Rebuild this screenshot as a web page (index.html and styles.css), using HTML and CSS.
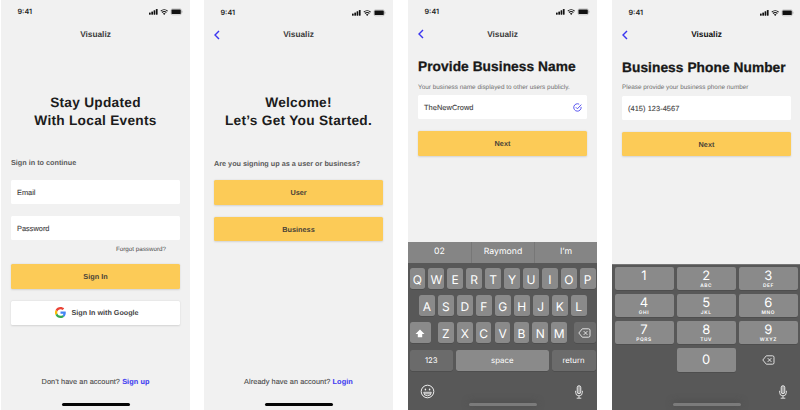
FILE: index.html
```html
<!DOCTYPE html>
<html lang="en">
<head>
<meta charset="utf-8">
<title>Visualiz</title>
<link rel="stylesheet" href="styles.css">
</head>
<body>
<svg class="defs" width="0" height="0">
  <symbol id="status" viewBox="0 0 34 8">
    <g fill="#111"><rect x="0" y="4.5" width="1.7" height="2.200" rx=".4"/><rect x="2.3" y="3.500" width="1.7" height="3.200" rx=".4"/><rect x="4.6" y="2.200" width="1.7" height="4.500" rx=".4"/><rect x="6.9" y="1" width="1.7" height="5.700" rx=".4"/>
    <path d="M15.2 6.9l-1.300-1.300a1.8 1.8 0 0 1 2.600 0z"/><rect x="22.500" y="1.5" width="9.300" height="4.600" rx=".9"/></g>
    <path d="M11.800 3.100a4.900 4.900 0 0 1 6.800 0M13 4.500a3.200 3.200 0 0 1 4.400 0" fill="none" stroke="#111" stroke-width="1.100"/>
    <rect x="22" y=".8" width="10.4" height="6" rx="1.5" fill="none" stroke="#111" stroke-opacity=".35" stroke-width=".5"/><path d="M33 2.8v1.9" stroke="#111" stroke-opacity=".4" stroke-width=".6"/>
  </symbol>
  <symbol id="back" viewBox="0 0 6 10"><path d="M5 .9L1 5l4 4.1" fill="none" stroke="#3a35f0" stroke-width="1.4"/></symbol>
  <symbol id="delete" viewBox="0 0 13 10"><path d="M4.3.8h6.2a1.5 1.5 0 0 1 1.5 1.5v5.4a1.5 1.5 0 0 1-1.500 1.500H4.3L.8 5zM5.7 3.1l3.7 3.8M9.4 3.1L5.7 6.9" fill="none" stroke="#fff" stroke-width=".8" stroke-linejoin="round"/></symbol>
  <symbol id="mic" viewBox="0 0 10 14"><g fill="none" stroke="#eee" stroke-width=".9"><rect x="3.2" y=".7" width="3.6" height="8" rx="1.8" fill="#999"/><path d="M1.6 5.800v1.400a3.400 3.700 0 0 0 6.800 0V5.800M5 11v2M2.700 13.200h4.600"/></g></symbol>
</svg>
<main class="board">
  <section class="screen">
    <div class="status"><span>9:41</span><svg><use href="#status"/></svg></div>
    <div class="nav"><span>Visualiz</span></div>
    <h1 class="hero">Stay Updated<br>With Local Events</h1>
    <p class="label">Sign in to continue</p>
    <div class="field">Email</div>
    <div class="field spaced">Password</div>
    <p class="forgot">Forgot password?</p>
    <div class="button">Sign In</div>
    <div class="button google spaced"><svg viewBox="0 0 48 48"><path fill="#ea4335" d="M24 9.500c3.500 0 6.700 1.200 9.200 3.600l6.900-6.900C35.900 2.400 30.500 0 24 0 14.600 0 6.500 5.400 2.600 13.200l8 6.200C12.400 13.700 17.700 9.500 24 9.500z"/><path fill="#4285f4" d="M47 24.600c0-1.600-.2-3.100-.4-4.600H24v9h12.900c-.6 3-2.200 5.500-4.700 7.200l7.700 6C44.400 38 47 32 47 24.600z"/><path fill="#fbbc05" d="M10.500 28.600a14.500 14.500 0 0 1 0-9.200l-8-6.200a24 24 0 0 0 0 21.600z"/><path fill="#34a853" d="M24 48c6.500 0 11.900-2.100 15.900-5.800l-7.700-6c-2.200 1.500-4.900 2.300-8.200 2.300-6.300 0-11.600-4.200-13.500-9.900l-8 6.200C6.500 42.600 14.600 48 24 48z"/></svg><span>Sign In with Google</span></div>
    <p class="foot">Don’t have an account? <b>Sign up</b></p>
    <div class="home"></div>
  </section>

  <section class="screen second">
    <div class="status"><span>9:41</span><svg><use href="#status"/></svg></div>
    <div class="nav"><svg><use href="#back"/></svg><span>Visualiz</span></div>
    <h1 class="hero">Welcome!<br>Let’s Get You Started.</h1>
    <p class="label">Are you signing up as a user or business?</p>
    <div class="button">User</div>
    <div class="button spaced">Business</div>
    <p class="foot">Already have an account? <b>Login</b></p>
    <div class="home"></div>
  </section>

  <section class="screen third">
    <div class="status"><span>9:41</span><svg><use href="#status"/></svg></div>
    <div class="nav"><svg><use href="#back"/></svg><span>Visualiz</span></div>
    <h1 class="title">Provide Business Name</h1>
    <p class="hint">Your business name displayed to other users publicly.</p>
    <div class="field company"><span>TheNewCrowd</span><svg viewBox="0 0 9 9"><path d="M8.100 3.900A3.700 3.700 0 1 1 6.200 1.200M2.800 4.200l1.600 1.600L8.300 1.600" fill="none" stroke="#4a46ee" stroke-width=".9"/></svg></div>
    <div class="button spaced">Next</div>
    <div class="keyboard">
      <div class="suggest"><span>02</span><span>Raymond</span><span>I’m</span></div>
      <div class="row"><i>Q</i><i>W</i><i>E</i><i>R</i><i>T</i><i>Y</i><i>U</i><i>I</i><i>O</i><i>P</i></div>
      <div class="row inset"><i>A</i><i>S</i><i>D</i><i>F</i><i>G</i><i>H</i><i>J</i><i>K</i><i>L</i></div>
      <div class="row sides"><i class="wide"><svg class="shift" viewBox="0 0 10 9"><path d="M5 .5L9.500 5H7.200v3.200H2.800V5H.5z" fill="#fff"/></svg></i><div class="row inner"><i>Z</i><i>X</i><i>C</i><i>V</i><i>B</i><i>N</i><i>M</i></div><i class="wide dark"><svg class="del"><use href="#delete"/></svg></i></div>
      <div class="row words"><i class="dark">123</i><i>space</i><i class="dark">return</i></div>
      <div class="tools"><svg class="smile" viewBox="0 0 15 15"><g fill="none" stroke="#eee" stroke-width="1"><circle cx="7.500" cy="7.500" r="6.300"/><path d="M3.700 8.300h7.600a3.800 3.500 0 0 1-7.600 0zM4.200 9.800h6.600" stroke-width=".9"/></g><g fill="#eee"><ellipse cx="5.400" cy="5.500" rx=".8" ry="1"/><ellipse cx="9.600" cy="5.500" rx=".8" ry="1"/></g></svg><svg class="mic"><use href="#mic"/></svg></div>
      <div class="home"></div>
    </div>
  </section>

  <section class="screen fourth">
    <div class="status"><span>9:41</span><svg><use href="#status"/></svg></div>
    <div class="nav"><svg><use href="#back"/></svg><span>Visualiz</span></div>
    <h1 class="title">Business Phone Number</h1>
    <p class="hint">Please provide your business phone number</p>
    <div class="field phone">(415) 123-4567</div>
    <div class="button spaced">Next</div>
    <div class="keyboard pad">
      <div class="keys">
        <i>1</i><i>2<small>ABC</small></i><i>3<small>DEF</small></i>
        <i>4<small>GHI</small></i><i>5<small>JKL</small></i><i>6<small>MNO</small></i>
        <i>7<small>PQRS</small></i><i>8<small>TUV</small></i><i>9<small>WXYZ</small></i>
        <span></span><i class="zero">0</i><span class="erase"><svg class="del"><use href="#delete"/></svg></span>
      </div>
      <div class="tools"><svg class="mic"><use href="#mic"/></svg></div>
      <div class="home"></div>
    </div>
  </section>
</main>
</body>
</html>
```
FILE: styles.css
```css
* { box-sizing: border-box; }
body { margin: 0; background: #fff; font-family: "Liberation Sans", Arial, sans-serif; overflow: hidden; text-rendering: geometricPrecision; }
.defs { display: none; }
h1, p { margin: 0; white-space: nowrap; }
i { font-style: normal; }
.board { display: grid; grid-template-columns: 203px 204px 204px 189px; height: 410px; margin-left: 1px; }
.screen { width: 189px; height: 410px; background: #f1f1f1; padding: 6px 10px 4px; display: flex; flex-direction: column; color: #3c3c3c; overflow: hidden; }
.second, .fourth { padding-top: 6.500px; }

.status { height: 12px; flex: none; display: flex; justify-content: space-between; align-items: center; margin: 0 -5px 0 6.500px; font: 600 7.200px/12px "Inter", sans-serif; color: #222; }
.status svg { width: 34px; height: 8px; margin-right: 2px; }
.nav { height: 12px; margin-top: 10px; margin-bottom: .5px; flex: none; display: grid; grid-template-columns: 12px 1fr 12px; align-items: center; font-weight: 700; font-size: 8.300px; line-height: 12px; }
.nav span { grid-column: 2; text-align: center; line-height: 11px; }
.nav svg { grid-column: 1; grid-row: 1; width: 6px; height: 10px; }
.fourth .nav { color: #111; }

.hero { margin-top: 53px; font-size: 13.700px; line-height: 18px; letter-spacing: .27px; text-align: center; color: #1c1c1c; }
.label { margin-top: 27px; height: 12px; line-height: 12px; font-weight: 700; font-size: 7.250px; color: #5a5a5a; margin-bottom: 11px; }
.second .label { margin-top: 28px; margin-bottom: 10px; }
.field { height: 24px; flex: none; background: #fff; border-radius: 1.500px; padding-left: 6px; font-size: 7.400px; line-height: 25px; -webkit-text-stroke: .1px; }
.company, .phone { letter-spacing: .06px; }
.spaced { margin-top: 12px; }
.forgot { margin: 4px 14px 0 auto; font-size: 6.250px; line-height: 11px; margin-bottom: 9.500px; color: #505050; }
.button { height: 24.500px; flex: none; background: #fccb57; border-radius: 1.500px; box-shadow: 0 .5px 2px rgba(0,0,0,.13); text-align: center; font-weight: 700; font-size: 7.300px; line-height: 26px; color: #4a4338; }
.google { background: #fff; display: flex; align-items: center; padding-left: 43.500px; gap: 6px; color: #444; line-height: 23px; font-size: 7.200px; }
.google svg { width: 11px; height: 11px; flex: none; }
.google span { height: 24px; white-space: nowrap; }
.second .spaced, .fourth .button { line-height: 25px; }
.foot { margin-top: auto; text-align: center; font-size: 7.350px; line-height: 12px; letter-spacing: .06px; margin-bottom: 15.500px; color: #444; -webkit-text-stroke: .08px; }
.foot b { color: #403cf0; }
.home { width: 68px; height: 3px; flex: none; margin: 0 auto; border-radius: 2px; background: #050505; }

.title { margin-top: 16.500px; font-size: 13.700px; line-height: 19px; letter-spacing: .08px; color: #181818; -webkit-text-stroke: .3px; }
.hint { margin-top: 6.500px; font-size: 6.400px; line-height: 10px; color: #707070; margin-bottom: 2.500px; }
.company { display: flex; align-items: center; justify-content: space-between; padding-right: 5px; }
.company svg { width: 9px; height: 9px; }

.keyboard { margin: auto -10px -4px; height: 168px; flex: none; background: #585858; font-family: "Inter", sans-serif; color: #fff; }
.keyboard i { background: #8a8a8a; border-radius: 2.500px; box-shadow: 0 .5px .5px #444; display: flex; align-items: center; justify-content: center; }
.suggest { height: 21px; margin-bottom: 5px; background: #858585; display: grid; grid-template-columns: repeat(3, 1fr); text-align: center; font-size: 8.700px; line-height: 20px; }
.suggest span + span { border-left: .5px solid #777; }
.row { display: flex; gap: 3.200px; height: 21px; margin: 0 1.500px 6.200px; }
.row i { flex: 1 1 0; min-width: 0; font-size: 12px; padding-top: 1px; }
.inset { margin-left: 11px; margin-right: 10.500px; }
.sides { gap: 7px; }
.row .inner { flex: 1; margin: 0; }
.row .wide { flex: 0 0 21.500px; }
.keyboard .dark { background: #6b6b6b; }
.shift { width: 10px; height: 9px; }
.del { width: 13px; height: 10px; }
.row.words { display: grid; grid-template-columns: 43.500px 1fr 44px; gap: 3px; margin-bottom: 0; }
.words i { font-size: 7.800px; padding: 0; }
.tools { display: flex; justify-content: space-between; align-items: center; height: 14px; margin: 14px 13px 4px 11.500px; }
.smile { width: 15px; height: 15px; }
.mic { width: 10px; height: 14px; }
.keyboard .home { background: #7b7b7b; box-shadow: 0 -1px 7px #484848; }

.pad { height: 146.500px; border-top: 1px solid #777; padding-top: 2.500px; }
.keys { display: grid; grid-template-columns: repeat(3, 59px); grid-template-rows: repeat(4, 23.300px); column-gap: 3.200px; row-gap: 3.800px; padding-left: 2.500px; }
.pad .keys i { flex-direction: column; justify-content: flex-start; font-size: 13px; line-height: 16px; border-radius: 2px; padding-top: .5px; }
.keys small { font-size: 4.800px; line-height: 4px; font-weight: 600; letter-spacing: .6px; }
.pad .keys .zero { justify-content: center; }
.erase { display: flex; align-items: center; justify-content: center; }
.pad .tools { justify-content: flex-end; margin: 13px 13px 4px; }
```
